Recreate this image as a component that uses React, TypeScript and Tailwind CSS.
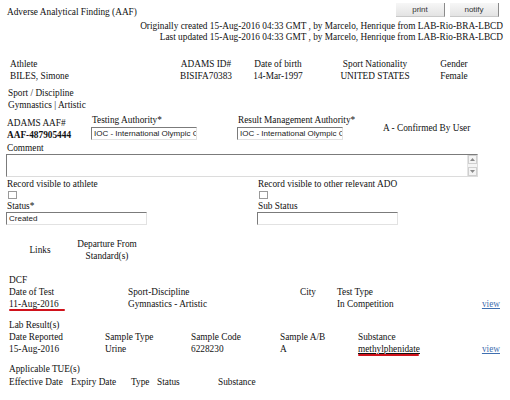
import React from 'react';

const Btn: React.FC<{ label: string }> = ({ label }) => (
  <div className="w-[49px] h-[14px] flex items-center justify-center bg-gradient-to-b from-[#f7f7f7] to-[#e3e3e3] border-r border-r-[#8a8a8a] border-b border-b-[#c8c8c8] [font-family:Liberation_Sans] text-[8px] text-[#333]">
    {label}
  </div>
);

const Field: React.FC<{ value?: string; w: string }> = ({ value, w }) => (
  <div className={`${w} h-[13px] border border-t-[#7b7b7b] border-l-[#7b7b7b] border-r-[#e2e2e2] border-b-[#e2e2e2] bg-white [font-family:Liberation_Sans] text-[8px] leading-[11px] pl-[2px] text-[#222] overflow-hidden whitespace-nowrap`}>
    {value}
  </div>
);

const Check: React.FC = () => (
  <div className="w-[9px] h-[8px] border border-[#9a9a9a] bg-white my-[1px] ml-[1px]" />
);

const ViewLink: React.FC = () => (
  <span className="text-[#3f6fb0] underline decoration-[#3f6fb0]">view</span>
);

export default function App() {
  return (
    <div className="w-[510px] h-[400px] overflow-hidden bg-white text-[#111] [font-family:Liberation_Serif] text-[9.3px] leading-[12px]">
      {/* header */}
      <div className="flex justify-between items-start pt-[3px] pl-[7px] pr-[11px]">
        <div className="pt-[3px]">Adverse Analytical Finding (AAF)</div>
        <div className="flex gap-[5px]">
          <Btn label="print" />
          <Btn label="notify" />
        </div>
      </div>
      <div className="text-right pr-[7px] leading-[11px] mt-[3px]">
        <div>Originally created 15-Aug-2016 04:33 GMT , by Marcelo, Henrique from LAB-Rio-BRA-LBCD</div>
        <div>Last updated 15-Aug-2016 04:33 GMT , by Marcelo, Henrique from LAB-Rio-BRA-LBCD</div>
      </div>

      {/* athlete */}
      <div className="flex mt-[15px] pl-[10px]">
        <div className="w-[166px]">
          <div>Athlete</div>
          <div>BILES, Simone</div>
        </div>
        <div className="w-[60px] text-center">
          <div>ADAMS ID#</div>
          <div>BISIFA70383</div>
        </div>
        <div className="w-[84px] text-center">
          <div>Date of birth</div>
          <div>14-Mar-1997</div>
        </div>
        <div className="w-[110px] text-center">
          <div>Sport Nationality</div>
          <div>UNITED STATES</div>
        </div>
        <div className="w-[48px] text-center">
          <div>Gender</div>
          <div>Female</div>
        </div>
      </div>

      <div className="pl-[8px] mt-[5px]">
        <div>Sport / Discipline</div>
        <div>Gymnastics | Artistic</div>
      </div>

      {/* AAF row */}
      <div className="flex pl-[7px] mt-[3px]">
        <div className="w-[84px] pt-[3px]">
          <div>ADAMS AAF#</div>
          <div className="font-bold">AAF-487905444</div>
        </div>
        <div className="w-[146px]">
          <div className="pl-[1px]">Testing Authority*</div>
          <div className="mt-[1px]">
            <Field w="w-[106px]" value="IOC - International Olympic C" />
          </div>
        </div>
        <div className="w-[146px]">
          <div className="pl-[1px]">Result Management Authority*</div>
          <div className="mt-[1px]">
            <Field w="w-[106px]" value="IOC - International Olympic C" />
          </div>
        </div>
        <div className="pt-[8px]">A - Confirmed By User</div>
      </div>

      {/* comment */}
      <div className="pl-[7px] mt-[1px]">Comment</div>
      <div className="ml-[6px] w-[472px] h-[23px] flex border border-t-[#7b7b7b] border-l-[#7b7b7b] border-r-[#dcdcdc] border-b-[#dcdcdc]">
        <div className="flex-1" />
        <div className="w-[10px] flex flex-col justify-between bg-[#f4f4f4] border-l border-[#e4e4e4]">
          <div className="h-[9px] flex items-center justify-center border border-[#cfcfcf]">
            <svg width="5" height="3" viewBox="0 0 5 3"><path d="M0 3 L2.5 0 L5 3 Z" fill="#8a8a8a" /></svg>
          </div>
          <div className="h-[9px] flex items-center justify-center border border-[#cfcfcf]">
            <svg width="5" height="3" viewBox="0 0 5 3"><path d="M0 0 L2.5 3 L5 0 Z" fill="#8a8a8a" /></svg>
          </div>
        </div>
      </div>

      {/* visibility + status */}
      <div className="flex pl-[7px] mt-[1px]">
        <div className="w-[251px]">
          <div>Record visible to athlete</div>
          <Check />
          <div>Status*</div>
          <div className="ml-[-1px]">
            <Field w="w-[141px]" value="Created" />
          </div>
        </div>
        <div>
          <div>Record visible to other relevant ADO</div>
          <Check />
          <div>Sub Status</div>
          <div className="ml-[-1px]">
            <Field w="w-[141px]" />
          </div>
        </div>
      </div>

      {/* links */}
      <div className="flex items-center mt-[13px] pl-[20px]">
        <div className="w-[40px] text-center">Links</div>
        <div className="w-[94px] text-center">
          <div>Departure From</div>
          <div>Standard(s)</div>
        </div>
      </div>

      {/* DCF */}
      <div className="pl-[9px] mt-[12px]">
        <div>DCF</div>
        <div className="flex pr-[10px]">
          <div className="w-[119px]">
            <div>Date of Test</div>
            <div className="relative">
              11-Aug-2016
              <div className="absolute left-0 top-[11px] w-[56px] h-[2px] bg-[#d0121b] rounded-full" />
            </div>
          </div>
          <div className="w-[172px]">
            <div>Sport-Discipline</div>
            <div>Gymnastics - Artistic</div>
          </div>
          <div className="w-[37px]">
            <div>City</div>
          </div>
          <div className="flex-1">
            <div>Test Type</div>
            <div>In Competition</div>
          </div>
          <div className="flex flex-col justify-end">
            <ViewLink />
          </div>
        </div>
      </div>

      {/* lab results */}
      <div className="pl-[9px] mt-[9px]">
        <div>Lab Result(s)</div>
        <div className="flex pr-[10px]">
          <div className="w-[96px]">
            <div>Date Reported</div>
            <div>15-Aug-2016</div>
          </div>
          <div className="w-[86px]">
            <div>Sample Type</div>
            <div>Urine</div>
          </div>
          <div className="w-[89px]">
            <div>Sample Code</div>
            <div>6228230</div>
          </div>
          <div className="w-[78px]">
            <div>Sample A/B</div>
            <div>A</div>
          </div>
          <div className="flex-1">
            <div>Substance</div>
            <div className="relative">
              <span className="underline">methylphenidate</span>
              <div className="absolute left-0 top-[11px] w-[61px] h-[2px] bg-[#d0121b] rounded-full" />
            </div>
          </div>
          <div className="flex flex-col justify-end">
            <ViewLink />
          </div>
        </div>
      </div>

      {/* TUE */}
      <div className="pl-[9px] mt-[8px]">
        <div>Applicable TUE(s)</div>
        <div className="flex mt-[1px]">
          <div className="w-[62px]">Effective Date</div>
          <div className="w-[60px]">Expiry Date</div>
          <div className="w-[26px]">Type</div>
          <div className="w-[61px]">Status</div>
          <div>Substance</div>
        </div>
      </div>
    </div>
  );
}
